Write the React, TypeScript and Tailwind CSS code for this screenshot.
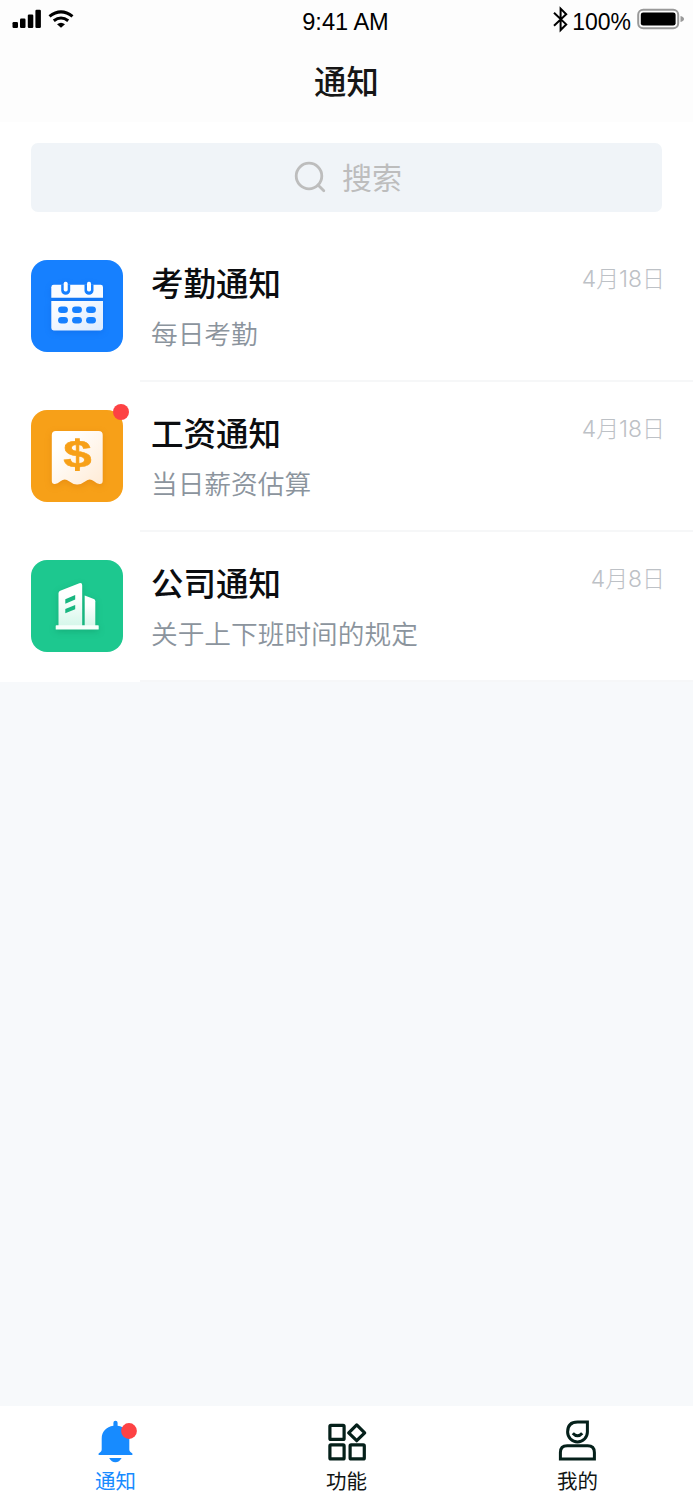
import type { ReactNode } from "react";

function StatusBar() {
  return (
    <div className="flex h-[39px] items-start justify-between pl-3 pr-2 font-['Liberation_Sans',sans-serif] text-[23px] leading-[27px] text-black">
      <div className="w-[154px] pt-[7px]">
        <svg width="64" height="24" viewBox="0 0 64 24">
          <rect x="0.5" y="15" width="5.5" height="6" rx="1.2" />
          <rect x="8" y="11.5" width="5.5" height="9.5" rx="1.2" />
          <rect x="15.8" y="7.5" width="5.5" height="13.5" rx="1.2" />
          <rect x="23.4" y="2.8" width="5.5" height="18.2" rx="1.2" />
          <path d="M37.5 9.4Q49 .2 60.5 9.4" fill="none" stroke="#000" strokeWidth="3.1" />
          <path d="M41.8 13.8Q49 8.2 56.2 13.8" fill="none" stroke="#000" strokeWidth="3.1" />
          <path d="M45 17.2Q49 14.2 53 17.2L49 20.8Z" />
        </svg>
      </div>
      <span className="whitespace-nowrap pt-[9px] text-[23.6px]">9:41 AM</span>
      <div className="flex w-[160px] justify-end">
        <svg className="mt-[6px] mr-[4px]" width="15" height="27" viewBox="0 0 15 27" fill="none" stroke="#000" strokeWidth="2">
          <path d="M1 6.8L13.2 18.4L7.6 24V2.6L13.2 8.2L1 19.8" />
        </svg>
        <span className="pt-[9px]">100%</span>
        <svg className="mt-[8px] ml-[6px]" width="48" height="23" viewBox="0 0 48 23">
          <rect x="1.2" y="1.8" width="40" height="18.4" rx="5" fill="none" stroke="#999" strokeWidth="2" />
          <rect x="3.8" y="4.4" width="34.8" height="13.2" rx="2.4" />
          <path d="M43.5 8Q47 9 47 11T43.5 14Z" fill="#999" />
        </svg>
      </div>
    </div>
  );
}

function CalendarIcon() {
  return (
    <svg className="drop-shadow-[0_2px_3px_rgba(0,60,180,0.2)]" width="92" height="92" viewBox="0 0 92 92">
      <defs>
        <linearGradient id="cal" x1="0" y1="0" x2="1" y2="1">
          <stop offset="0" stopColor="#fff" />
          <stop offset="1" stopColor="#dcebff" />
        </linearGradient>
      </defs>
      <path d="M20.3 37.8V27.2Q20.3 24.8 22.7 24.8H69.6Q72 24.8 72 27.2V37.8Z" fill="#fafcff" />
      <path d="M20.3 41H72V68Q72 70.4 69.6 70.4H22.7Q20.3 70.4 20.3 68Z" fill="url(#cal)" />
      {[34.7, 58].map((x) => (
        <g key={x}>
          <path d={`M${x - 4.5} 24.5H${x + 4.5}V30.5A4.5 4.3 0 0 1 ${x - 4.5} 30.5Z`} fill="#1680ff" />
          <rect x={x - 2} y="21.8" width="4" height="9.7" rx="1.7" fill="#fff" />
        </g>
      ))}
      {[32, 46, 60].map((x) =>
        [49.7, 60.3].map((y) => (
          <rect key={`${x}-${y}`} x={x - 4.9} y={y - 3.3} width="9.8" height="6.6" rx="3.3" fill="#1680ff" />
        )),
      )}
    </svg>
  );
}

function ReceiptIcon() {
  return (
    <svg className="drop-shadow-[0_2px_3px_rgba(190,90,0,0.25)]" width="92" height="92" viewBox="0 0 92 92">
      <defs>
        <linearGradient id="receipt" x1="0" y1="0" x2="1" y2="1">
          <stop offset="0.2" stopColor="#fff" />
          <stop offset="1" stopColor="#ffebd5" />
        </linearGradient>
      </defs>
      <path
        d="M20.8 25Q20.8 21 24.8 21H67.7Q71.7 21 71.7 25V71Q71.7 74.2 68.5 74Q66 73.8 63 71.2Q58.7 67.6 54.5 71.2Q50 74.6 46.2 74.4Q42.4 74.6 38 71.2Q33.8 67.6 29.5 71.2Q26.5 73.8 24 74Q20.8 74.2 20.8 71Z"
        fill="url(#receipt)"
      />
      <text
        x="0"
        y="0"
        transform="translate(46.3 57.2) scale(1.36 1)"
        textAnchor="middle"
        fontFamily="Liberation Sans, sans-serif"
        fontWeight="700"
        fontSize="37.5"
        fill="#f7a018"
        stroke="#f7a018"
        strokeWidth="0.5"
      >
        $
      </text>
      <path d="M44 28.3H48.8V33H44ZM44 56H48.8V61H44Z" fill="#f7a018" />
    </svg>
  );
}

function BuildingIcon() {
  return (
    <svg className="drop-shadow-[0_2px_3px_rgba(0,100,60,0.25)]" width="92" height="92" viewBox="0 0 92 92">
      <defs>
        <linearGradient id="tower" x1="0" y1="0" x2="0" y2="1">
          <stop offset="0.3" stopColor="#fff" />
          <stop offset="1" stopColor="#d5f7ea" />
        </linearGradient>
      </defs>
      <path
        fillRule="evenodd"
        d="M27.5 66V33.2Q27.5 31.4 29.2 30.7L48.3 23.3Q51.2 22.5 51.2 25.2V66ZM34.3 39.2V43.8L44.2 39.6V35ZM34.3 48.9V53.3L44.2 49.3V44.9Z"
        fill="url(#tower)"
      />
      <path d="M53.7 66V35.6L62.8 39Q64.3 39.6 64.3 41.2V66Z" fill="url(#tower)" />
      <rect x="24.7" y="65.3" width="43" height="4.2" rx="0.6" fill="#f6fffb" />
    </svg>
  );
}

type Notice = {
  title: string;
  detail: string;
  date: string;
  tile: string;
  icon: ReactNode;
  unread?: boolean;
};

const notices: Notice[] = [
  { title: "考勤通知", detail: "每日考勤", date: "4月18日", tile: "bg-[#1680ff]", icon: <CalendarIcon /> },
  { title: "工资通知", detail: "当日薪资估算", date: "4月18日", tile: "bg-[#f7a018]", icon: <ReceiptIcon />, unread: true },
  { title: "公司通知", detail: "关于上下班时间的规定", date: "4月8日", tile: "bg-[#1dc88f]", icon: <BuildingIcon /> },
];

function NoticeRow({ notice }: { notice: Notice }) {
  return (
    <li className="flex h-[150px] pl-[31px]">
      <div className={`relative mt-[28px] size-[92.4px] shrink-0 rounded-[16px] ${notice.tile}`}>
        {notice.icon}
        {notice.unread && <span className="absolute -top-[6px] -right-[6px] size-[16px] rounded-full bg-[#fd4244]" />}
      </div>
      <div className="ml-[16.6px] flex flex-1 justify-between border-b-2 border-[#f6f7f8] pr-[28px] pl-[11px]">
        <div>
          <h2 className="mt-[30px] text-[32.5px] leading-[40px] font-medium text-[#0b0d10]">{notice.title}</h2>
          <p className="mt-[14px] text-[26.7px] leading-[34px] font-[350] text-[#8b949d]">{notice.detail}</p>
        </div>
        <time className="mt-[33px] font-[Inter,'Noto_Sans_CJK_SC',sans-serif] text-[22.9px] leading-[28px] font-light text-[#bdc1c6]">
          {notice.date}
        </time>
      </div>
    </li>
  );
}

function BellIcon() {
  return (
    <svg width="42" height="44" viewBox="0 0 42 44">
      <path
        d="M18.4 5.8V2.8Q18.4 .7 20.5 .7T22.6 2.8V5.8C29.8 6.8 34.3 12 34.3 18.5V29.5Q34.3 31 35.5 32L37.4 33.6V35H3.6V33.6L5.5 32Q6.7 31 6.7 29.5V18.5C6.7 12 11.2 6.8 18.4 5.8Z"
        fill="#178bff"
      />
      <path d="M14.2 38H26.6Q24.4 42.2 20.4 42.2T14.2 38Z" fill="#178bff" />
      <circle cx="34" cy="11" r="7.9" fill="#fd4244" />
    </svg>
  );
}

function GridIcon() {
  return (
    <svg width="40" height="44" viewBox="0 0 40 44" fill="none" stroke="#05201a" strokeWidth="3.2" strokeLinejoin="round">
      <rect x="2.9" y="5.4" width="14.2" height="14" rx="1" />
      <rect x="2.9" y="24.9" width="14.2" height="14" rx="1" />
      <rect x="23.1" y="24.9" width="14.2" height="14" rx="1" />
      <path d="M29.7 4.9L37.7 12.8L29.7 20.7L21.7 12.8Z" />
    </svg>
  );
}

function PersonIcon() {
  return (
    <svg width="40" height="44" viewBox="0 0 40 44" fill="none" stroke="#05201a" strokeWidth="3">
      <path d="M29.4 2H19.6Q9.6 2 9.6 12A9.9 9.9 0 0 0 29.4 12Z" />
      <path d="M14.8 13.2Q19.6 18.4 24.2 13.2" />
      <path d="M2.4 39V32.5Q2.4 25.8 9.2 25.8H29.6Q36.4 25.8 36.4 32.5V39Z" />
    </svg>
  );
}

const tabs = [
  { label: "通知", icon: <BellIcon />, color: "text-[#178bff]" },
  { label: "功能", icon: <GridIcon />, color: "text-[#101413]" },
  { label: "我的", icon: <PersonIcon />, color: "text-[#101413]" },
];

export default function App() {
  return (
    <div className="flex h-[1500px] w-[693px] flex-col overflow-hidden bg-[#f7f9fb] font-['Noto_Sans_CJK_SC',sans-serif]">
      <header className="h-[122px] bg-[#fdfdfd]">
        <StatusBar />
        <h1 className="mt-[19px] text-center text-[32.4px] leading-[44px] font-medium text-[#161616]">通知</h1>
      </header>
      <main className="bg-white">
        <div className="px-[31px] pt-[21px]">
          <div className="flex h-[69px] items-center justify-center gap-[16px] rounded-[7px] bg-[#f0f4f8] pl-[3px] text-[#bdbdbd]">
            <svg className="-mt-[2px]" width="32" height="32" viewBox="0 0 32 32" fill="none" stroke="currentColor" strokeWidth="2.8" strokeLinecap="round">
              <circle cx="15" cy="15" r="12.8" />
              <path d="M24 24L29.8 29.8" />
            </svg>
            <span className="-mt-[4px] text-[30px] leading-[40px]">搜索</span>
          </div>
        </div>
        <ul className="pt-[20px]">
          {notices.map((notice) => (
            <NoticeRow key={notice.title} notice={notice} />
          ))}
        </ul>
      </main>
      <nav className="mt-auto grid h-[94px] grid-cols-3 bg-white">
        {tabs.map((tab) => (
          <div key={tab.label} className={`flex flex-col items-center pt-[14px] ${tab.color}`}>
            {tab.icon}
            <span className="mt-[2px] text-[20.5px] leading-[28px]">{tab.label}</span>
          </div>
        ))}
      </nav>
    </div>
  );
}
